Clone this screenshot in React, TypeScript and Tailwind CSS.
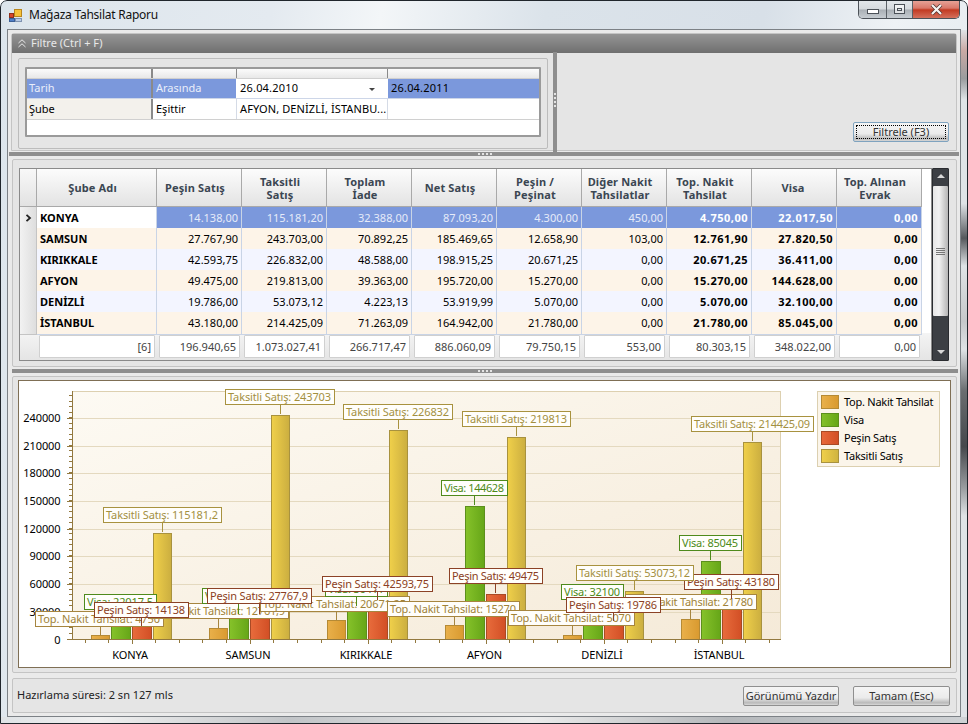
import React from "react";

const FONT = "font-['Liberation_Sans',Arial,sans-serif]";

const headers = [
  ["Şube Adı"],
  ["Peşin Satış"],
  ["Taksitli", "Satış"],
  ["Toplam", "İade"],
  ["Net Satış"],
  ["Peşin /", "Peşinat"],
  ["Diğer Nakit", "Tahsilatlar"],
  ["Top. Nakit", "Tahsilat"],
  ["Visa"],
  ["Top. Alınan", "Evrak"],
];

const rows = [
  ["KONYA", "14.138,00", "115.181,20", "32.388,00", "87.093,20", "4.300,00", "450,00", "4.750,00", "22.017,50", "0,00"],
  ["SAMSUN", "27.767,90", "243.703,00", "70.892,25", "185.469,65", "12.658,90", "103,00", "12.761,90", "27.820,50", "0,00"],
  ["KIRIKKALE", "42.593,75", "226.832,00", "48.588,00", "198.915,25", "20.671,25", "0,00", "20.671,25", "36.411,00", "0,00"],
  ["AFYON", "49.475,00", "219.813,00", "39.363,00", "195.720,00", "15.270,00", "0,00", "15.270,00", "144.628,00", "0,00"],
  ["DENİZLİ", "19.786,00", "53.073,12", "4.223,13", "53.919,99", "5.070,00", "0,00", "5.070,00", "32.100,00", "0,00"],
  ["İSTANBUL", "43.180,00", "214.425,09", "71.263,09", "164.942,00", "21.780,00", "0,00", "21.780,00", "85.045,00", "0,00"],
];

const totals = ["[6]", "196.940,65", "1.073.027,41", "266.717,47", "886.060,09", "79.750,15", "553,00", "80.303,15", "348.022,00", "0,00"];

const series = {
  tn: { grad: "gTn", stroke: "#b58a35", text: "#a08238", box: "#a6853f" },
  visa: { grad: "gVisa", stroke: "#5c8f1c", text: "#4d8a18", box: "#4f8a1c" },
  pesin: { grad: "gPesin", stroke: "#a94a25", text: "#8c3f22", box: "#8c4226" },
  tak: { grad: "gTak", stroke: "#a8923f", text: "#a3903f", box: "#a8923f" },
};

type Key = keyof typeof series;

const baseY = 639.5;
const yOf = (v: number) => baseY - (v * 27.67) / 30000;

const bars: [Key, number, number, number][] = [
  ["tn", 91, 18, 4750], ["visa", 111, 19, 22017.5], ["pesin", 132, 19, 14138], ["tak", 153, 18, 115181.2],
  ["tn", 209, 18, 12761.9], ["visa", 229, 19, 27820.5], ["pesin", 250, 19, 27767.9], ["tak", 271, 18, 243703],
  ["tn", 327, 18, 20671.25], ["visa", 347, 19, 36411], ["pesin", 368, 19, 42593.75], ["tak", 389, 18, 226832],
  ["tn", 445, 18, 15270], ["visa", 465, 19, 144628], ["pesin", 486, 19, 49475], ["tak", 507, 18, 219813],
  ["tn", 563, 18, 5070], ["visa", 583, 19, 32100], ["pesin", 604, 19, 19786], ["tak", 625, 18, 53073.12],
  ["tn", 681, 18, 21780], ["visa", 701, 19, 85045], ["pesin", 722, 19, 43180], ["tak", 743, 18, 214425.09],
];

// series, x, y, w, bar centre, bar top, text
const labels: [Key, number, number, number, number, number, string][] = [
  ["tn", 35, 611, 128, 100, 635, "Top. Nakit Tahsilat: 4750"],
  ["tn", 148, 603, 140, 218, 628, "Top. Nakit Tahsilat: 12761,9"],
  ["tn", 260, 596, 149, 336, 620, "Top. Nakit Tahsilat: 20671,25"],
  ["tn", 387, 601, 132, 454, 625, "Top. Nakit Tahsilat: 15270"],
  ["tn", 508, 610, 126, 572, 635, "Top. Nakit Tahsilat: 5070"],
  ["tn", 625, 594, 131, 690, 619, "Top. Nakit Tahsilat: 21780"],
  ["visa", 84, 594, 72, 120, 619, "Visa: 22017,5"],
  ["visa", 202, 588, 72, 238, 614, "Visa: 27820,5"],
  ["visa", 325, 581, 62, 356, 606, "Visa: 36411"],
  ["visa", 441, 480, 66, 474, 505, "Visa: 144628"],
  ["visa", 561, 584, 62, 592, 610, "Visa: 32100"],
  ["visa", 679, 535, 62, 710, 560, "Visa: 85045"],
  ["pesin", 94, 602, 94, 141, 626, "Peşin Satış: 14138"],
  ["pesin", 207, 588, 104, 259, 614, "Peşin Satış: 27767,9"],
  ["pesin", 322, 576, 110, 377, 600, "Peşin Satış: 42593,75"],
  ["pesin", 449, 568, 93, 495, 593, "Peşin Satış: 49475"],
  ["pesin", 566, 597, 94, 613, 621, "Peşin Satış: 19786"],
  ["pesin", 684, 574, 94, 731, 599, "Peşin Satış: 43180"],
  ["tak", 103, 507, 118, 162, 532, "Taksitli Satış: 115181,2"],
  ["tak", 225, 389, 109, 280, 414, "Taksitli Satış: 243703"],
  ["tak", 343, 404, 109, 398, 429, "Taksitli Satış: 226832"],
  ["tak", 462, 411, 108, 516, 436, "Taksitli Satış: 219813"],
  ["tak", 576, 565, 117, 634, 590, "Taksitli Satış: 53073,12"],
  ["tak", 691, 416, 122, 752, 441, "Taksitli Satış: 214425,09"],
];

const yMajors = [0, 30000, 60000, 90000, 120000, 150000, 180000, 210000, 240000];
const xNames: [string, number][] = [["KONYA", 130], ["SAMSUN", 248], ["KIRIKKALE", 366], ["AFYON", 484.5], ["DENİZLİ", 602], ["İSTANBUL", 719]];
const legend = [
  ["Top. Nakit Tahsilat", "bg-[linear-gradient(90deg,#e9b04a,#d99a30)] border-[#b58a35]"],
  ["Visa", "bg-[linear-gradient(90deg,#84c02a,#66a618)] border-[#5c8f1c]"],
  ["Peşin Satış", "bg-[linear-gradient(90deg,#e8683a,#d24f25)] border-[#a94a25]"],
  ["Taksitli Satış", "bg-[linear-gradient(90deg,#efcf4a,#d0b440)] border-[#a8923f]"],
];

function Chart() {
  const minorY: number[] = [];
  for (let y = baseY; y > 392; y -= 5.534) minorY.push(y);
  const minorX: number[] = [];
  for (let x = 84.5; x < 780; x += 23.6) minorX.push(x);
  return (
    <svg viewBox="19 381 931 285" width={931} height={285} className="absolute left-0 top-0">
      <defs>
        <linearGradient id="gPlot" x1="0" y1="0" x2="1" y2="1">
          <stop offset="0" stopColor="#fdfaf3" />
          <stop offset="1" stopColor="#f5ead8" />
        </linearGradient>
        <linearGradient id="gTn"><stop offset="0" stopColor="#e9b04a" /><stop offset="1" stopColor="#d99a30" /></linearGradient>
        <linearGradient id="gVisa"><stop offset="0" stopColor="#86c22a" /><stop offset="1" stopColor="#66a618" /></linearGradient>
        <linearGradient id="gPesin"><stop offset="0" stopColor="#e86c3c" /><stop offset="1" stopColor="#d24f25" /></linearGradient>
        <linearGradient id="gTak"><stop offset="0" stopColor="#f0d04a" /><stop offset="1" stopColor="#cbae40" /></linearGradient>
      </defs>
      <rect x={72.5} y={391.5} width={708} height={248} fill="url(#gPlot)" stroke="#ddd0b0" />
      {yMajors.slice(1).map((v) => (
        <line key={v} x1={73} x2={780} y1={Math.round(yOf(v)) + 0.5} y2={Math.round(yOf(v)) + 0.5} stroke="#e4d9bf" />
      ))}
      {minorY.map((y) => (
        <line key={y} x1={69} x2={72} y1={Math.round(y) - 0.5} y2={Math.round(y) - 0.5} stroke="#93793f" />
      ))}
      {yMajors.map((v) => (
        <g key={v}>
          <line x1={67} x2={72} y1={Math.round(yOf(v)) - (v ? -0.5 : 0.5)} y2={Math.round(yOf(v)) - (v ? -0.5 : 0.5)} stroke="#93793f" />
          <text x={60.5} y={yOf(v) + 4} textAnchor="end" fontSize={11} letterSpacing={-0.1} fill="#000">{v}</text>
        </g>
      ))}
      {bars.map(([k, x, w, v], i) => (
        <rect key={i} x={x + 0.5} y={Math.round(yOf(v)) + 0.5} width={w} height={baseY - Math.round(yOf(v)) - 0.5} fill={`url(#${series[k].grad})`} stroke={series[k].stroke} />
      ))}
      <line x1={72.5} x2={72.5} y1={391} y2={640} stroke="#93793f" />
      <line x1={67} x2={781} y1={639.5} y2={639.5} stroke="#93793f" />
      {minorX.map((x, i) => (
        <line key={x} x1={Math.round(x) + 0.5} x2={Math.round(x) + 0.5} y1={640} y2={(i + 3) % 5 === 0 ? 644 : 643} stroke="#93793f" />
      ))}
      {xNames.map(([n, x]) => (
        <text key={n} x={x} y={659} textAnchor="middle" fontSize={11} letterSpacing={-0.1} fill="#000">{n}</text>
      ))}
      {labels.map(([k, x, y, w, cx, top, t]) => (
        <g key={t}>
          <line x1={cx + 0.5} x2={cx + 0.5} y1={y + 15} y2={top} stroke={series[k].box} />
          <rect x={x + 0.5} y={y + 0.5} width={w} height={15} fill="#fffefb" stroke={series[k].box} />
          <text x={x + 3} y={y + 12} fontSize={11} textLength={w - 6} lengthAdjust="spacing" fill={series[k].text}>{t}</text>
        </g>
      ))}
    </svg>
  );
}

function Btn({ x, w, y, label, focus }: { x: number; w: number; y: number; label: string; focus?: boolean }) {
  return (
    <div
      style={{ left: x, top: y, width: w }}
      className={`absolute h-[20px] rounded-[2px] border ${focus ? "border-[#7fa3bf]" : "border-[#8f8f8f]"} bg-[linear-gradient(180deg,#f5f5f5_0%,#ebebeb_60%,#b9b9b9_88%,#d8d8d8_100%)] flex items-center justify-center text-[11px] text-[#333]`}
    >
      {focus && <div className="absolute inset-[2px] border border-dotted border-black" />}
      {label}
    </div>
  );
}

function Dots({ vertical, className }: { vertical?: boolean; className: string }) {
  return (
    <div className={`absolute flex gap-[2px] ${vertical ? "flex-col" : ""} ${className}`}>
      {[0, 1, 2, 3].map((i) => (
        <div key={i} className="w-[2px] h-[2px] bg-[#e4e4e4]" />
      ))}
    </div>
  );
}

export default function App() {
  return (
    <div className={`${FONT} relative w-[968px] h-[724px] overflow-hidden text-[11px] text-black rounded-t-[7px] bg-[linear-gradient(100deg,#dce5ec_0%,#e4eaf0_25%,#f3f6f8_35%,#dbe3ea_50%,#d8e0e8_70%,#eef2f5_82%,#dfe6ec_100%)]`}>
      {/* glass edge on the right and at the bottom */}
      <div className="absolute left-[961px] top-[30px] w-[7px] h-[694px] bg-[linear-gradient(180deg,#dfe3e6_0%,#c9a9a4_3%,#9a9c9e_7%,#dfe3e6_10%,#dfe3e6_25%,#55585c_30%,#dfe3e6_34%,#c5c8ca_42%,#dfe3e6_46%,#6a6d70_52%,#45484c_60%,#9a9da0_66%,#dfe3e6_70%,#dfe3e6_100%)]" />
      <div className="absolute left-0 top-[717px] w-[968px] h-[7px] bg-[linear-gradient(90deg,#dfe3e6_0%,#f0f0f0_10%,#c2c5c8_30%,#ececec_55%,#b5b8bb_75%,#cfd2d5_100%)]" />

      {/* title bar */}
      <svg className="absolute left-[9px] top-[9px]" width={13} height={13} viewBox="0 0 13 13">
        <rect x={5.5} y={0.5} width={7} height={7} fill="#f6c23a" stroke="#b8861e" />
        <rect x={0.5} y={4.5} width={4} height={4} fill="#d9462a" stroke="#8f2f1a" />
        <rect x={0.5} y={9.5} width={5} height={3} fill="#4f7fc9" stroke="#3a5f96" />
        <rect x={6.5} y={9.5} width={6} height={3} fill="#b9cbe6" stroke="#7f93b0" />
      </svg>
      <div className="absolute left-[29px] top-[6px] text-[12px] tracking-[-0.25px] font-['Open_Sans',sans-serif] text-[#111]">Mağaza Tahsilat Raporu</div>

      <div className="absolute left-[858px] top-0 w-[102px] h-[19px] flex rounded-b-[5px] overflow-hidden border border-[#4b5158] border-t-0">
        <div className="w-[28px] border-r border-[#5a6066] bg-[linear-gradient(180deg,#e4e8ec_0%,#d5dade_50%,#a9afb5_55%,#c6ccd1_100%)] flex items-center justify-center">
          <div className="w-[12px] h-[5px] mt-[5px] border border-[#4b5158] bg-white" />
        </div>
        <div className="w-[26px] border-r border-[#5a6066] bg-[linear-gradient(180deg,#e4e8ec_0%,#d5dade_50%,#a9afb5_55%,#c6ccd1_100%)] flex items-center justify-center">
          <div className="w-[11px] h-[10px] border border-[#4b5158] bg-white/60 flex items-center justify-center">
            <div className="w-[5px] h-[3px] border border-[#4b5158]" />
          </div>
        </div>
        <div className="flex-1 bg-[linear-gradient(180deg,#e8a79c_0%,#d9786a_45%,#c23a22_55%,#d4705c_100%)] flex items-center justify-center">
          <svg width={13} height={11} viewBox="0 0 13 11">
            <path d="M2 1 L11 10 M11 1 L2 10" stroke="#50332f" strokeWidth={3.6} />
            <path d="M2 1 L11 10 M11 1 L2 10" stroke="#f7f4f3" strokeWidth={2.2} />
          </svg>
        </div>
      </div>

      {/* client area */}
      <div className="absolute left-[7px] top-[29px] w-[954px] h-[688px] bg-[#eaeaea] border border-[#7c8186]" />

      {/* filter panel */}
      <div className="absolute left-[11px] top-[33px] w-[946px] h-[118px] bg-[#e5e5e5] border border-[#c4c4c4] rounded-t-[3px]">
        <div className="h-[19px] bg-[linear-gradient(180deg,#959595,#6f6f6f)] flex items-center pl-[6px] gap-[5px] text-[#e8e8e8]">
          <svg width={8} height={9} viewBox="0 0 8 9" fill="none" stroke="#e8e8e8" strokeWidth={1}>
            <path d="M0.5 4 L4 0.8 L7.5 4 M0.5 8 L4 4.8 L7.5 8" />
          </svg>
          <span>Filtre (Ctrl + F)</span>
        </div>
      </div>
      <div className="absolute left-[18px] top-[58px] w-[530px] h-[91px] border border-[#bcbcbc] rounded-[2px]" />
      <div className="absolute left-[25px] top-[67px] w-[516px] h-[70px] bg-white border-2 border-[#9a9a9a] rounded-[1px]">
        <div className="grid grid-cols-[126px_84px_151px_151px] h-[10px] bg-[linear-gradient(180deg,#fbfbfb,#e8e8e8)] border-b border-[#cfcfcf]">
          <div className="border-r-2 border-[#8a8a8a]" />
          <div className="border-r border-[#8a8a8a]" />
          <div className="border-r border-[#8a8a8a]" />
          <div />
        </div>
        <div className="grid grid-cols-[126px_84px_151px_151px] h-[20px] border-b border-[#cdd6e8] leading-[18px]">
          <div className="bg-[#7b98dc] text-[#eaeefa] pl-[2px] border-r-2 border-[#8a8a8a]">Tarih</div>
          <div className="bg-[#7b98dc] text-[#eaeefa] pl-[3px] border-r border-white">Arasında</div>
          <div className="bg-white pl-[3px] relative tracking-[0.2px]">
            26.04.2010
            <div className="absolute right-[13px] top-[9px] w-0 h-0 border-x-[3px] border-x-transparent border-t-[3px] border-t-[#444]" />
          </div>
          <div className="bg-[#7b98dc] text-black pl-[3px] tracking-[0.2px]">26.04.2011</div>
        </div>
        <div className="grid grid-cols-[126px_84px_151px_151px] h-[21px] border-b border-[#d0d0d0] leading-[19px]">
          <div className="bg-[#f3f1ec] pl-[2px] border-r-2 border-[#8a8a8a]">Şube</div>
          <div className="pl-[3px] border-r border-[#d5dbe6]">Eşittir</div>
          <div className="pl-[3px] border-r border-[#d5dbe6] tracking-[0.1px] whitespace-nowrap overflow-hidden">AFYON, DENİZLİ, İSTANBU...</div>
          <div />
        </div>
      </div>
      <div className="absolute left-[553px] top-[52px] w-[4px] h-[100px] bg-[#8e8e8e]" />
      <Dots vertical className="left-[554px] top-[93px]" />
      <Btn x={853} y={122} w={96} label="Filtrele (F3)" focus />

      <div className="absolute left-[9px] top-[152px] w-[950px] h-[4px] bg-[#8e8e8e]" />
      <Dots className="left-[478px] top-[153px]" />

      {/* grid panel */}
      <div className="absolute left-[12px] top-[159px] w-[945px] h-[208px] bg-[#e5e5e5] border border-[#c4c4c4] rounded-[2px]" />
      <div className="absolute left-[19px] top-[168px] w-[913px] h-[193px] bg-white border border-[#8a8a8a] overflow-hidden">
        <div className="grid grid-cols-[17px_120px_repeat(9,85px)] h-[38px]">
          <div className="bg-[linear-gradient(180deg,#f8f8f8,#e2e2e2)] border-r border-b border-[#a9a9a9]" />
          {headers.map((h, i) => (
            <div key={i} className={`bg-[linear-gradient(180deg,#fcfcfc,#e3e3e3)] border-r border-b border-[#a9a9a9] flex flex-col items-center justify-center font-bold text-[#3b4652] leading-[13px] tracking-[0.15px] ${h[0] === "Visa" ? "pr-[2px]" : "pr-[8px]"}`}>
              {h.map((l) => (
                <span key={l}>{l}</span>
              ))}
            </div>
          ))}
        </div>
        {rows.map((r, ri) => {
          const sel = ri === 0;
          const bg = sel ? "bg-[#7b98dc]" : ri % 2 === 1 ? "bg-[#fdf4e8]" : "bg-[#f3f5ff]";
          return (
            <div key={r[0]} className="grid grid-cols-[17px_120px_repeat(9,85px)] h-[21px] leading-[22px]">
              <div className="bg-[linear-gradient(90deg,#f2f2f2,#dedede)] border-r border-b border-[#c4c4c4] flex items-center justify-center">
                {sel && (
                  <svg width={7} height={8} viewBox="0 0 7 8" fill="none" stroke="#222" strokeWidth={1.8}>
                    <path d="M1.5 0.8 L5 4 L1.5 7.2" />
                  </svg>
                )}
              </div>
              {r.map((c, i) => {
                if (i === 0)
                  return (
                    <div key={i} className={`${sel ? "bg-white" : bg} border-r border-b border-[#c9d4e6] pl-[3px] font-bold`}>{c}</div>
                  );
                const bold = i >= 7;
                return (
                  <div key={i} className={`${bg} border-r border-b border-[#c9d4e6] text-right pr-[3px] ${bold ? "font-bold tracking-[0.5px]" : ""} ${sel ? (bold ? "text-white" : "text-[#e6ebf9]") : ""}`}>{c}</div>
                );
              })}
            </div>
          );
        })}
        <div className="grid grid-cols-[17px_120px_repeat(9,85px)_9px] h-[28px] bg-[linear-gradient(180deg,#f4f4f4,#e4e4e4)]">
          <div />
          {totals.map((c, i) => (
            <div key={i} className="p-[2px]">
              <div className="h-[23px] bg-white border border-[#d0d0d0] rounded-[1px] text-right pr-[3px] leading-[21px] text-[#444]">{c}</div>
            </div>
          ))}
        </div>
      </div>

      {/* scrollbar */}
      <div className="absolute left-[932px] top-[168px] w-[17px] h-[193px] bg-[#3c3f44] border border-[#2a2c30] rounded-[1px]">
        <div className="absolute left-[4px] top-[5px] w-0 h-0 border-x-[4px] border-x-transparent border-b-[4px] border-b-[#d8d8d8]" />
        <div className="absolute left-[0px] top-[17px] w-[15px] h-[130px] bg-[linear-gradient(90deg,#e6e6e6,#f2f2f2_40%,#b5b5b5)] rounded-[1px] flex flex-col items-center justify-center gap-[1px]">
          <div className="w-[9px] h-px bg-[#777]" />
          <div className="w-[9px] h-px bg-[#777]" />
          <div className="w-[9px] h-px bg-[#777]" />
          <div className="w-[9px] h-px bg-[#777]" />
        </div>
        <div className="absolute left-[4px] bottom-[6px] w-0 h-0 border-x-[4px] border-x-transparent border-t-[4px] border-t-[#d8d8d8]" />
      </div>

      <div className="absolute left-[12px] top-[369px] w-[946px] h-[4px] bg-[#8e8e8e]" />
      <Dots className="left-[478px] top-[370px]" />

      {/* chart panel */}
      <div className="absolute left-[12px] top-[376px] w-[945px] h-[297px] bg-[#e5e5e5] border border-[#c4c4c4] rounded-[2px]" />
      <div className="absolute left-[18px] top-[380px] w-[933px] h-[288px] bg-white border border-[#7f6f55]">
        <Chart />
        <div className="absolute left-[798px] top-[10px] w-[123px] h-[76px] bg-[#fbf5ea] border border-[#dcd0b0] pl-[3px] pt-[3px] flex flex-col gap-[4px]">
          {legend.map(([t, c]) => (
            <div key={t} className="flex items-center h-[14px] gap-[5px]">
              <div className={`w-[18px] h-[14px] border ${c}`} />
              <span className="whitespace-nowrap tracking-[-0.25px]">{t}</span>
            </div>
          ))}
        </div>
      </div>

      {/* status */}
      <div className="absolute left-[12px] top-[678px] w-[945px] h-[35px] bg-[#e5e5e5] border border-[#c4c4c4] rounded-[2px] flex items-center pl-[4px] text-[#222]">
        Hazırlama süresi: 2 sn 127 mls
      </div>
      <Btn x={743} y={686} w={96} label="Görünümü Yazdır" />
      <Btn x={853} y={686} w={97} label="Tamam (Esc)" />

      {/* window outline */}
      <div className="absolute inset-0 rounded-t-[7px] border border-[#20262c] pointer-events-none" />
    </div>
  );
}
